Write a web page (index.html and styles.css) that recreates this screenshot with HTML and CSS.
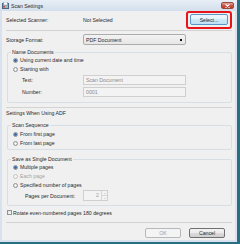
FILE: index.html
```html
<!DOCTYPE html>
<html lang="en">
<head>
  <meta charset="UTF-8">
  <title>Scan Settings</title>
  <link rel="stylesheet" href="styles.css">
</head>
<body>
  <div class="window">
    <div class="titlebar">
      <svg class="app-icon" width="7" height="7" viewBox="0 0 7 7">
        <rect x="0.5" y="1.5" width="6" height="5" fill="#9fb4c9" stroke="#4d6580" stroke-width="1"/>
        <rect x="1.5" y="0" width="4" height="3" fill="#ffffff" stroke="#7a8da0" stroke-width="0.6"/>
        <rect x="1" y="4" width="2" height="1.5" fill="#d6442f"/>
      </svg>
      <span class="title">Scan Settings</span>
      <span class="close">
        <svg width="5" height="4" viewBox="0 0 5 4">
          <path d="M0.5 0.3 L4.5 3.7 M4.5 0.3 L0.5 3.7" stroke="#fff" stroke-width="1.1"/>
        </svg>
      </span>
    </div>

    <div class="content">
      <div class="row scanner-row">
        <span class="label">Selected Scanner:</span>
        <span class="value">Not Selected</span>
        <span class="highlight"><button class="btn btn-focus btn-select">Select...</button></span>
      </div>
      <div class="sep sep-top"></div>

      <div class="row format-row">
        <span class="label">Storage Format:</span>
        <div class="combo"><span>PDF Document</span><span class="arrow"></span></div>
      </div>

      <fieldset class="group name-group">
        <legend>Name Documents</legend>
        <div class="option"><span class="radio checked"></span>Using current date and time</div>
        <div class="option"><span class="radio"></span>Starting with</div>
        <div class="field"><span class="field-label">Text:</span><span class="textbox">Scan Document</span></div>
        <div class="field"><span class="field-label">Number:</span><span class="textbox">0001</span></div>
      </fieldset>

      <div class="sep sep-adf"></div>
      <div class="section-title">Settings When Using ADF</div>

      <fieldset class="group sequence-group">
        <legend>Scan Sequence</legend>
        <div class="option"><span class="radio checked"></span>From first page</div>
        <div class="option"><span class="radio"></span>From last page</div>
      </fieldset>

      <fieldset class="group single-group">
        <legend>Save as Single Document</legend>
        <div class="option"><span class="radio checked"></span>Multiple pages</div>
        <div class="option disabled"><span class="radio"></span>Each page</div>
        <div class="option"><span class="radio"></span>Specified number of pages</div>
        <div class="field spin-field">
          <span class="field-label">Pages per Document:</span>
          <span class="spinner">
            <span class="spin-value">2</span>
            <span class="spin-arrows"><span class="up"><i></i></span><span class="down"><i></i></span></span>
          </span>
        </div>
      </fieldset>

      <div class="check-row"><span class="checkbox"></span>Rotate even-numbered pages 180 degrees</div>
      <div class="sep sep-bottom"></div>

      <div class="buttons">
        <button class="btn" disabled>OK</button>
        <button class="btn">Cancel</button>
      </div>
    </div>
  </div>
</body>
</html>
```

FILE: styles.css
```css
* { box-sizing: border-box; }
body {
  margin: 0;
  width: 240px;
  height: 244px;
  overflow: hidden;
  background: #2b6e80;
  font-family: "Liberation Sans", Arial, sans-serif;
  font-size: 5.2px;
  color: #2a2a2a;
}
.window {
  width: 237px;
  height: 242px;
  background: #f0f0f0;
  border: 2px solid #d7e2ee;
  border-top: 0;
}
.titlebar {
  display: flex;
  align-items: center;
  height: 11px;
  margin: 0 -2px;
  padding: 0 3px 0 2px;
  background: linear-gradient(#e7eef6, #d3dfec);
}
.app-icon { flex: none; }
.title { margin-left: 2px; }
.close {
  display: flex;
  align-items: center;
  justify-content: center;
  width: 13px;
  height: 7px;
  margin-left: auto;
  border: 1px solid #9a4a40;
  border-radius: 2px;
  background: linear-gradient(#e3a69c, #c85848 50%, #b93a2b);
}

.content { padding: 0 3px 0 4px; }
.row { display: flex; align-items: center; }
.label { width: 77px; flex: none; }
.scanner-row { height: 18px; }
.highlight {
  margin-left: auto;
  border: 2px solid #e8141b;
  border-radius: 3px;
  padding: 1px 2px 2px;
  line-height: 0;
}
.sep { border-top: 1px solid #d3d3d3; }
.sep-top { margin-top: 1px; }
.format-row { margin-top: 3px; }

.combo {
  display: flex;
  align-items: center;
  width: 103px;
  height: 11px;
  padding: 0 3px 0 2px;
  border: 1px solid #acacac;
  border-radius: 2px;
  background: linear-gradient(#f3f3f3, #e6e6e6);
}
.arrow {
  margin-left: auto;
  width: 2px;
  height: 2px;
  background: #111;
}

.group {
  margin: 0 0 0 1px;
  padding: 0 4px 5px 5px;
  border: 1px solid #d5dfe5;
  border-radius: 2px;
  min-width: 0;
}
.group legend {
  line-height: 7px;
  padding: 0 1px;
  margin-left: -2px;
}
.name-group { margin-top: 4px; }
.sequence-group { margin-top: 5px; padding-bottom: 2px; }
.single-group { margin-top: 6px; padding-bottom: 4px; }

.option {
  display: flex;
  align-items: center;
  height: 8px;
}
.option + .option { margin-top: 1px; }
.sequence-group .option:first-of-type { margin-top: 1px; }
.option.disabled { color: #a3a3a3; }

.radio {
  flex: none;
  width: 5px;
  height: 5px;
  margin-right: 2px;
  border: 1px solid #8f9499;
  border-radius: 50%;
  background: radial-gradient(circle, #ffffff, #dcdcdc);
}
.radio.checked { background: radial-gradient(circle, #3a6fae 0 1.2px, #cddbea 1.8px); }
.disabled .radio { border-color: #c4c4c4; background: #f4f4f4; }

.field {
  display: flex;
  align-items: center;
  margin-top: 2px;
}
.field-label { width: 61px; margin-left: 9px; flex: none; }
.textbox {
  display: flex;
  align-items: center;
  width: 103px;
  height: 10px;
  padding-left: 2px;
  border: 1px solid #cfcfcf;
  background: #f3f3f3;
  color: #8a8a8a;
}

.spin-field { margin-top: 1px; }
.spin-field .field-label { width: 58px; margin-left: 12px; }
.spinner {
  display: flex;
  width: 25px;
  height: 11px;
  border: 1px solid #cfcfcf;
  background: #f3f3f3;
  color: #9a9a9a;
}
.spin-value { flex: 1; text-align: right; padding-right: 2px; line-height: 9px; }
.spin-arrows {
  display: flex;
  flex-direction: column;
  width: 6px;
  border-left: 1px solid #d6d6d6;
}
.spin-arrows span { flex: 1; display: flex; align-items: center; justify-content: center; }
.spin-arrows .up { border-bottom: 1px solid #d6d6d6; }
.spin-arrows i {
  width: 0;
  height: 0;
  border-left: 1.5px solid transparent;
  border-right: 1.5px solid transparent;
}
.spin-arrows .up i { border-bottom: 1.5px solid #c2c2c2; }
.spin-arrows .down i { border-top: 1.5px solid #c2c2c2; }

.check-row {
  display: flex;
  align-items: center;
  height: 9px;
  margin-top: 2px;
  padding-left: 1px;
}
.checkbox {
  flex: none;
  width: 5px;
  height: 5px;
  margin-right: 1px;
  border: 1px solid #8f9499;
  background: linear-gradient(135deg, #dcdcdc, #ffffff);
}
.section-title { margin-top: 2px; line-height: 7px; }
.sep-adf { margin-top: 4px; }
.sep-bottom { margin-top: 5px; }

.buttons {
  display: flex;
  justify-content: flex-end;
  gap: 8px;
  margin-top: 5px;
  padding-right: 7px;
}
.btn {
  width: 36px;
  height: 10px;
  padding: 0;
  font: inherit;
  color: #2a2a2a;
  border: 1px solid #707070;
  border-radius: 2px;
  background: linear-gradient(#f2f2f2, #ebebeb 50%, #dddddd 50%, #cfcfcf);
}
.btn:disabled {
  color: #9a9a9a;
  border-color: #b5b9bc;
  background: #f4f4f4;
}
.btn-select { width: 38px; height: 11px; }
.btn-focus {
  border-color: #5b95c4;
  background: linear-gradient(#eef7fd, #e1f1fb 50%, #cde8f8 50%, #bfe0f4);
}
```
